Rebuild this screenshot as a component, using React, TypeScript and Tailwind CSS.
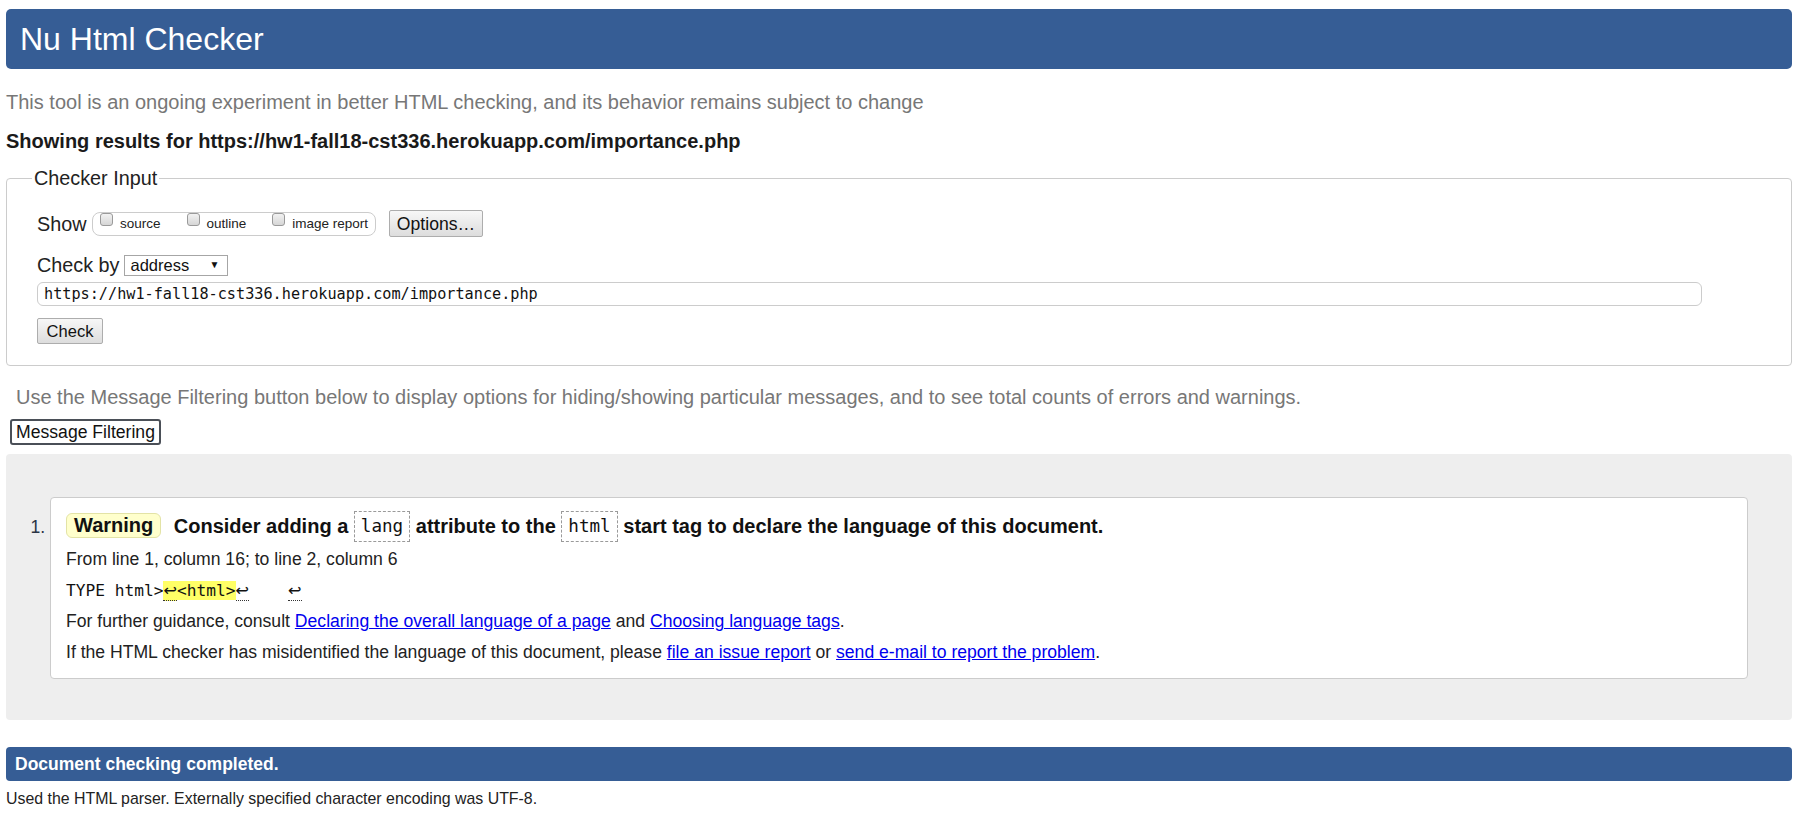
import React from "react";

const sans = "font-['Liberation_Sans',Arial,sans-serif]";
const mono = "font-['DejaVu_Sans_Mono',monospace]";

function Checkbox({ label }: { label: string }) {
  return (
    <label className="flex items-center">
      <span className="mb-[9px] h-[13px] w-[13px] rounded-[3px] border border-[#9a9a9a] bg-gradient-to-b from-[#f2f2f2] to-[#d6d6d6]" />
      <span className="ml-[7px] text-[13.5px] leading-[16px] text-[#222]">{label}</span>
    </label>
  );
}

function GrayButton({ children, className = "" }: { children: React.ReactNode; className?: string }) {
  return (
    <button
      type="button"
      className={`rounded-[2px] border border-[#adadad] bg-gradient-to-b from-[#f7f7f7] to-[#dddddd] text-[#111] ${className}`}
    >
      {children}
    </button>
  );
}

function Ret({ hl = false }: { hl?: boolean }) {
  return (
    <span className={`border-b border-dotted border-[#333] font-['DejaVu_Sans',sans-serif] ${hl ? "bg-[#ffff66]" : ""}`}>
      ↩
    </span>
  );
}

function Code({ children }: { children: React.ReactNode }) {
  return (
    <code
      className={`${mono} mb-[2px] inline-block border border-dashed border-[#9a9a9a] bg-white px-[6px] align-middle text-[17.6px] font-normal leading-[29px] text-[#111]`}
    >
      {children}
    </code>
  );
}

export default function App() {
  return (
    <div className={`${sans} min-h-[814px] bg-white px-[6px] text-[#222]`}>
      <div className="pt-[9px]">
        <div className="flex h-[60px] items-center rounded-[5px] bg-[#365d95] pl-[14px]">
          <h1 className="text-[32px] font-normal text-white">Nu Html Checker</h1>
        </div>
      </div>

      <p className="mt-[21px] text-[20px] leading-[24px] text-[#777]">
        This tool is an ongoing experiment in better HTML checking, and its behavior remains subject to change
      </p>
      <p className="mt-[15px] text-[20px] font-bold leading-[24px] text-[#1a1a1a]">
        Showing results for https://hw1-fall18-cst336.herokuapp.com/importance.php
      </p>

      <fieldset className="mt-[13px] rounded-[4px] border border-[#cccccc] px-[30px] pb-[21px] pt-[20px]">
        <legend className="-ml-[5px] px-[2px] text-[19.8px] leading-[24px] text-[#222]">Checker Input</legend>

        <div className="flex h-[27px] items-center">
          <span className="text-[19.8px] leading-[24px]">Show</span>
          <div className="ml-[5.5px] flex h-[24px] w-[284px] items-center gap-[26px] rounded-[8px] border border-[#cccccc] pl-[7px]">
            <Checkbox label="source" />
            <Checkbox label="outline" />
            <Checkbox label="image report" />
          </div>
          <GrayButton className="ml-[13px] h-[27px] w-[94px] text-[17.6px] leading-[20px]">Options…</GrayButton>
        </div>

        <div className="mt-[17px] flex h-[22px] items-center">
          <span className="text-[19.8px] leading-[24px]">Check by</span>
          <div className="ml-[5px] flex h-[21px] w-[104px] items-center justify-between border border-[#a6a6a6] bg-white pl-[5px] pr-[8px]">
            <span className="text-[16.5px] leading-[19px] text-[#111]">address</span>
            <span className="text-[10px] leading-[10px] text-[#111]">▼</span>
          </div>
        </div>

        <div className={`${mono} mt-[6px] flex h-[24px] w-[1665px] items-center rounded-[6px] border border-[#cccccc] pl-[6px] text-[15.2px] text-[#111]`}>
          https://hw1-fall18-cst336.herokuapp.com/importance.php
        </div>

        <GrayButton className="mt-[12px] h-[26px] w-[66px] text-[16.5px] leading-[20px]">Check</GrayButton>
      </fieldset>

      <p className="mt-[19px] pl-[10px] text-[20px] leading-[24px] text-[#777]">
        Use the Message Filtering button below to display options for hiding/showing particular messages, and to see total counts of errors and warnings.
      </p>
      <button
        type="button"
        className="ml-[4px] mt-[10px] h-[26px] w-[151px] rounded-[3px] border-2 border-[#4a4f57] bg-white text-[17.6px] leading-[20px] text-[#111]"
      >
        Message Filtering
      </button>

      <div className="mt-[9px] rounded-[4px] bg-[#eeeeee] px-[44px] pb-[41px] pt-[43px]">
        <ol className="list-decimal text-[17.6px] marker:text-[#2b3445]">
          <li className="rounded-[4px] border border-[#cccccc] bg-white pb-[10px] pl-[15px] pr-[15px] pt-[11px]">
            <p className="text-[20px] font-bold leading-[34px] text-[#111]">
              <strong className="mb-[5px] mr-[7px] inline-block rounded-[6px] border border-[#e3e3a6] bg-[#ffffcc] px-[7px] align-middle leading-[23px]">
                Warning
              </strong>{" "}
              Consider adding a <Code>lang</Code> attribute to the <Code>html</Code> start tag to declare the language of this document.
            </p>
            <p className="leading-[31px]">From line 1, column 16; to line 2, column 6</p>
            <p className="leading-[31px]">
              <code className={`${mono} whitespace-pre text-[16.2px] text-[#111]`}>
                TYPE html&gt;
                <span className="bg-[#ffff66]">
                  <Ret hl />
                  &lt;html&gt;
                </span>
                <Ret />
                {"    "}
                <Ret />
              </code>
            </p>
            <p className="leading-[31px]">
              For further guidance, consult{" "}
              <a href="#" className="text-[#0000ee] underline">
                Declaring the overall language of a page
              </a>{" "}
              and{" "}
              <a href="#" className="text-[#0000ee] underline">
                Choosing language tags
              </a>
              .
            </p>
            <p className="leading-[31px]">
              If the HTML checker has misidentified the language of this document, please{" "}
              <a href="#" className="text-[#0000ee] underline">
                file an issue report
              </a>{" "}
              or{" "}
              <a href="#" className="text-[#0000ee] underline">
                send e-mail to report the problem
              </a>
              .
            </p>
          </li>
        </ol>
      </div>

      <div className="mt-[27px] flex h-[34px] items-center rounded-[4px] bg-[#365d95] pl-[9px]">
        <h2 className="text-[17.5px] font-bold text-white">Document checking completed.</h2>
      </div>
      <p className="mt-[8px] text-[15.9px] leading-[20px] text-[#222]">
        Used the HTML parser. Externally specified character encoding was UTF-8.
      </p>
    </div>
  );
}
